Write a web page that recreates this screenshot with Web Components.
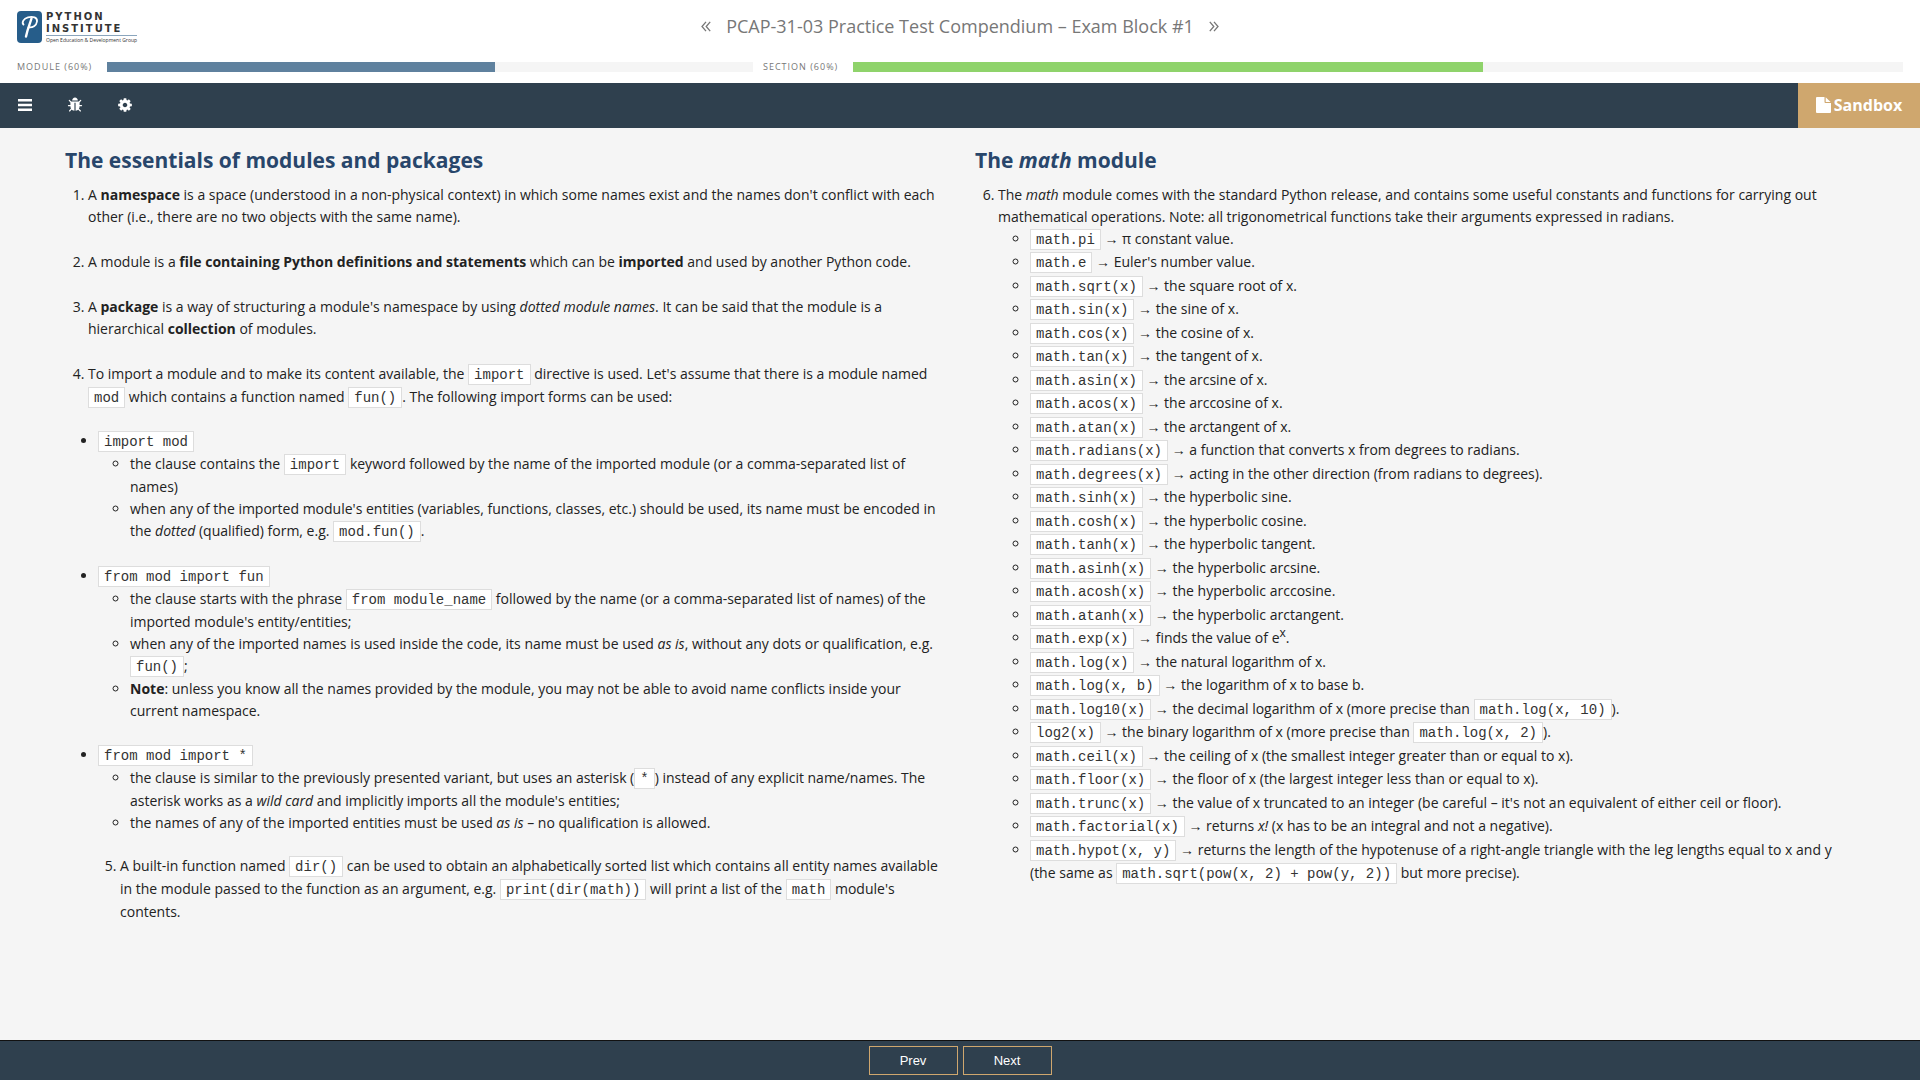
<!DOCTYPE html>
<html lang="en">
<head>
<meta charset="utf-8">
<title>PCAP-31-03 Practice Test Compendium</title>
<style>
  body {
    margin: 0;
    background: #f5f5f5;
    color: #222;
    font: 14px/22px "Open Sans", "Liberation Sans", sans-serif;
  }
</style>
</head>
<body>
<course-page>
  <course-header slot="top"></course-header>
  <tool-bar slot="top"></tool-bar>
  <modules-lesson></modules-lesson>
  <math-lesson></math-lesson>
  <page-nav slot="bottom"></page-nav>
</course-page>

<script>
const lessonStyle = `
  <style>
    :host { display: block; }
    h2 {
      margin: 0 0 12px;
      color: #28466b;
      font-size: 21px;
      font-weight: 700;
      line-height: 24px;
    }
    ol, ul { margin: 0; padding: 0; }
    ol { padding-left: 23px; }
    ul ul, ol ul { padding-left: 32px; list-style: circle; }
    b { font-weight: 700; }
    code {
      padding: 2px 5px 1px;
      border: 1px solid #ddd;
      background: #fff;
      color: #333;
      font: 14px/22px "Liberation Mono", monospace;
    }
    sup { font-size: 12px; line-height: 0; }
  </style>
`;

class CoursePage extends HTMLElement {
  constructor() {
    super();
    this.attachShadow({ mode: 'open' });
    this.shadowRoot.innerHTML = `
      <style>
        :host {
          display: flex;
          flex-direction: column;
          min-height: 100vh;
        }
        main {
          flex: 1;
          display: grid;
          grid-template-columns: 1fr 1fr;
          gap: 30px;
          padding: 20px 65px;
        }
      </style>
      <slot name="top"></slot>
      <main><slot></slot></main>
      <slot name="bottom"></slot>
    `;
  }
}

class BrandLogo extends HTMLElement {
  constructor() {
    super();
    this.attachShadow({ mode: 'open' });
    this.shadowRoot.innerHTML = `
      <style>
        :host { display: block; }
        a {
          display: flex;
          gap: 4px;
          color: #333;
          text-decoration: none;
        }
        .name {
          font: bold 10px/12px "DejaVu Sans", sans-serif;
          letter-spacing: 2px;
        }
        .name span { display: block; }
        small {
          display: block;
          border-top: 1px solid #8aa5bd;
          font: 5px/9px "Open Sans", sans-serif;
        }
      </style>
      <a href="#">
        <svg width="25" height="32" viewBox="0 0 25 32" aria-hidden="true">
          <rect width="25" height="32" rx="4" fill="#265d8a"/>
          <path d="M6.500 13.500C4.500 11.500 6.500 7.500 11 6.300C16 5 20.500 6.500 20 10.500C19.500 14.500 15.500 17 11.500 16.300" fill="none" stroke="#fff" stroke-width="1.800" stroke-linecap="round"/>
          <path d="M14.500 7.500C13 12.500 10.500 18 9 25.500" fill="none" stroke="#fff" stroke-width="2.400" stroke-linecap="round"/>
        </svg>
        <div>
          <div class="name"><span>PYTHON</span><span>INSTITUTE</span></div>
          <small>Open Education &amp; Development Group</small>
        </div>
      </a>
    `;
  }
}

class ProgressMeter extends HTMLElement {
  constructor() {
    super();
    this.attachShadow({ mode: 'open' });
  }

  connectedCallback() {
    const value = this.getAttribute('value');
    this.shadowRoot.innerHTML = `
      <style>
        :host { display: flex; align-items: center; }
        span {
          width: 90px;
          color: #777;
          font-size: 9px;
          line-height: 14px;
          letter-spacing: 1px;
          text-transform: uppercase;
        }
        .track { flex: 1; height: 10px; background: #f5f5f5; }
        .fill { width: ${value}%; height: 10px; background: var(--fill); }
      </style>
      <span id="label">${this.getAttribute('label')} (${value}%)</span>
      <div class="track" role="progressbar" aria-labelledby="label" aria-valuenow="${value}">
        <div class="fill"></div>
      </div>
    `;
  }
}

class CourseHeader extends HTMLElement {
  constructor() {
    super();
    this.attachShadow({ mode: 'open' });
    this.shadowRoot.innerHTML = `
      <style>
        :host {
          display: block;
          background: #fff;
          color: #777;
        }
        .title {
          display: grid;
          grid-template-columns: 1fr auto 1fr;
          height: 60px;
          padding: 0 17px;
        }
        brand-logo { margin-top: 11px; }
        nav {
          display: flex;
          align-items: center;
          gap: 15px;
          height: 52px;
        }
        h1 {
          margin: 0;
          font-size: 18px;
          font-weight: 400;
          line-height: 24px;
        }
        nav a { display: flex; color: inherit; }
        .meters {
          display: grid;
          grid-template-columns: 736fr 1140fr;
          gap: 10px;
          padding: 0 17px;
          height: 23px;
          align-items: start;
        }
      </style>
      <div class="title">
        <brand-logo></brand-logo>
        <nav>
          <a href="#" aria-label="Previous module">
            <svg width="10" height="11" viewBox="0 0 10 11" fill="none" stroke="currentColor" stroke-width="1.300"><path d="M5 .8L1 5.500L5 10.200M9.200 .8L5.200 5.500L9.200 10.200"/></svg>
          </a>
          <h1>PCAP-31-03 Practice Test Compendium – Exam Block #1</h1>
          <a href="#" aria-label="Next module">
            <svg width="10" height="11" viewBox="0 0 10 11" fill="none" stroke="currentColor" stroke-width="1.300"><path d="M.8 .8L4.800 5.500L.8 10.200M5 .8L9 5.500L5 10.200"/></svg>
          </a>
        </nav>
      </div>
      <div class="meters">
        <progress-meter label="Module" value="60" style="--fill: #5f819e"></progress-meter>
        <progress-meter label="Section" value="60" style="--fill: #8fd36b"></progress-meter>
      </div>
    `;
  }
}

class ToolBar extends HTMLElement {
  constructor() {
    super();
    this.attachShadow({ mode: 'open' });
    this.shadowRoot.innerHTML = `
      <style>
        :host {
          display: flex;
          justify-content: space-between;
          height: 45px;
          background: #2f404e;
        }
        .tools { display: flex; }
        button {
          display: flex;
          align-items: center;
          justify-content: center;
          gap: 3px;
          padding: 0 0 1px;
          border: 0;
          background: none;
          color: #fff;
          font: 700 16px/24px "Open Sans", sans-serif;
        }
        .tools button { width: 50px; }
        .sandbox { width: 122px; background: #cfa76e; }
        svg { fill: currentColor; }
      </style>
      <div class="tools">
        <button aria-label="Menu">
          <svg width="14" height="12" viewBox="0 0 14 12"><path d="M0 0h14v2.500H0zM0 4.700h14v2.500H0zM0 9.500h14v2.500H0z"/></svg>
        </button>
        <button aria-label="Report a bug">
          <svg width="16" height="16" viewBox="0 0 1792 1792"><path d="M1696 960q0 26-19 45t-45 19h-224q0 171-67 290l208 209q19 19 19 45t-19 45q-18 19-45 19t-45-19l-198-197q-5 5-15 13t-42 28.500-65 36.500-82 29-97 13v-896h-128v896q-51 0-101.500-13.500t-87-33-66-39-43.500-32.500l-15-14-183 207q-20 21-48 21-24 0-43-16-19-18-20.500-44.500t15.500-46.500l202-227q-58-114-58-274h-224q-26 0-45-19t-19-45 19-45 45-19h224v-294l-173-173q-19-19-19-45t19-45 45-19 45 19l173 173h844l173-173q19-19 45-19t45 19 19 45-19 45l-173 173v294h224q26 0 45 19t19 45zm-480-576h-640q0-133 93.500-226.500t226.500-93.500 226.500 93.500 93.500 226.500z"/></svg>
        </button>
        <button aria-label="Settings">
          <svg width="16" height="16" viewBox="0 0 1792 1792"><path d="M1152 896q0-106-75-181t-181-75-181 75-75 181 75 181 181 75 181-75 75-181zm512-109v222q0 12-8 23t-20 13l-185 28q-19 54-39 91 35 50 107 138 10 12 10 25t-9 23q-27 37-99 108t-94 71q-12 0-26-9l-138-108q-44 23-91 38-16 136-29 186-7 28-36 28h-222q-14 0-24.500-8.500t-11.500-21.500l-28-184q-49-16-90-37l-141 107q-10 9-25 9-14 0-25-11-126-114-165-168-7-10-7-23 0-12 8-23 15-21 51-66.500t54-70.500q-27-50-41-99l-183-27q-13-2-21-12.500t-8-23.500v-222q0-12 8-23t19-13l186-28q14-46 39-92-40-57-107-138-10-12-10-24 0-10 9-23 26-36 98.500-107.500t94.500-71.500q13 0 26 10l138 107q44-23 91-38 16-136 29-186 7-28 36-28h222q14 0 24.500 8.500t11.500 21.500l28 184q49 16 90 37l142-107q9-9 24-9 13 0 25 10 129 119 165 170 7 8 7 22 0 12-8 23-15 21-51 66.500t-54 70.500q26 50 41 98l183 28q13 2 21 12.500t8 23.500z"/></svg>
        </button>
      </div>
      <button class="sandbox">
        <svg width="15" height="16" viewBox="0 0 15 16"><path d="M0 1q0-1 1-1h7.500v5q0 1 1 1H15v9q0 1-1 1H1q-1 0-1-1zM9.700 0.200L14.600 4.900H9.700z"/></svg>
        <span>Sandbox</span>
      </button>
    `;
  }
}

class ModulesLesson extends HTMLElement {
  constructor() {
    super();
    this.attachShadow({ mode: 'open' });
    this.shadowRoot.innerHTML = lessonStyle + `
      <style>
        .points, .forms { display: grid; }
        .points { gap: 23px; }
        .forms {
          gap: 22px;
          margin: 21px 0;
          padding-left: 33px;
        }
        .next { padding-left: 55px; }
      </style>
      <h2>The essentials of modules and packages</h2>
      <ol class="points">
        <li>A <b>namespace</b> is a space (understood in a non-physical context) in which some names exist and the names don't conflict with each other (i.e., there are no two objects with the same name).</li>
        <li>A module is a <b>file containing Python definitions and statements</b> which can be <b>imported</b> and used by another Python code.</li>
        <li>A <b>package</b> is a way of structuring a module's namespace by using <i>dotted module names</i>. It can be said that the module is a hierarchical <b>collection</b> of modules.</li>
        <li>To import a module and to make its content available, the <code>import</code> directive is used. Let's assume that there is a module named <code>mod</code> which contains a function named <code>fun()</code>. The following import forms can be used:</li>
      </ol>
      <ul class="forms">
        <li><code>import mod</code>
          <ul>
            <li>the clause contains the <code>import</code> keyword followed by the name of the imported module (or a comma-separated list of names)</li>
            <li>when any of the imported module's entities (variables, functions, classes, etc.) should be used, its name must be encoded in the <i>dotted</i> (qualified) form, e.g. <code>mod.fun()</code>.</li>
          </ul>
        </li>
        <li><code>from mod import fun</code>
          <ul>
            <li>the clause starts with the phrase <code>from module_name</code> followed by the name (or a comma-separated list of names) of the imported module's entity/entities;</li>
            <li>when any of the imported names is used inside the code, its name must be used <i>as is</i>, without any dots or qualification, e.g. <code>fun()</code>;</li>
            <li><b>Note</b>: unless you know all the names provided by the module, you may not be able to avoid name conflicts inside your current namespace.</li>
          </ul>
        </li>
        <li><code>from mod import *</code>
          <ul>
            <li>the clause is similar to the previously presented variant, but uses an asterisk (<code>*</code>) instead of any explicit name/names. The asterisk works as a <i>wild card</i> and implicitly imports all the module's entities;</li>
            <li>the names of any of the imported entities must be used <i>as is</i> – no qualification is allowed.</li>
          </ul>
        </li>
      </ul>
      <ol class="next" start="5">
        <li>A built-in function named <code>dir()</code> can be used to obtain an alphabetically sorted list which contains all entity names available in the module passed to the function as an argument, e.g. <code>print(dir(math))</code> will print a list of the <code>math</code> module's contents.</li>
      </ol>
    `;
  }
}

class MathLesson extends HTMLElement {
  constructor() {
    super();
    this.attachShadow({ mode: 'open' });
    this.entries = [
      ['math.pi', 'π constant value.'],
      ['math.e', "Euler's number value."],
      ['math.sqrt(x)', 'the square root of x.'],
      ['math.sin(x)', 'the sine of x.'],
      ['math.cos(x)', 'the cosine of x.'],
      ['math.tan(x)', 'the tangent of x.'],
      ['math.asin(x)', 'the arcsine of x.'],
      ['math.acos(x)', 'the arccosine of x.'],
      ['math.atan(x)', 'the arctangent of x.'],
      ['math.radians(x)', 'a function that converts x from degrees to radians.'],
      ['math.degrees(x)', 'acting in the other direction (from radians to degrees).'],
      ['math.sinh(x)', 'the hyperbolic sine.'],
      ['math.cosh(x)', 'the hyperbolic cosine.'],
      ['math.tanh(x)', 'the hyperbolic tangent.'],
      ['math.asinh(x)', 'the hyperbolic arcsine.'],
      ['math.acosh(x)', 'the hyperbolic arccosine.'],
      ['math.atanh(x)', 'the hyperbolic arctangent.'],
      ['math.exp(x)', 'finds the value of e<sup>x</sup>.'],
      ['math.log(x)', 'the natural logarithm of x.'],
      ['math.log(x, b)', 'the logarithm of x to base b.'],
      ['math.log10(x)', 'the decimal logarithm of x (more precise than <code>math.log(x, 10)</code>).'],
      ['log2(x)', 'the binary logarithm of x (more precise than <code>math.log(x, 2)</code>).'],
      ['math.ceil(x)', 'the ceiling of x (the smallest integer greater than or equal to x).'],
      ['math.floor(x)', 'the floor of x (the largest integer less than or equal to x).'],
      ['math.trunc(x)', "the value of x truncated to an integer (be careful – it's not an equivalent of either ceil or floor)."],
      ['math.factorial(x)', 'returns <i>x!</i> (x has to be an integral and not a negative).'],
      ['math.hypot(x, y)', 'returns the length of the hypotenuse of a right-angle triangle with the leg lengths equal to x and y (the same as <code>math.sqrt(pow(x, 2) + pow(y, 2))</code> but more precise).']
    ];
  }

  connectedCallback() {
    this.shadowRoot.innerHTML = lessonStyle + `
      <style>
        ul li:nth-child(even) { margin-bottom: 1px; }
      </style>
      <h2>The <i>math</i> module</h2>
      <ol start="6">
        <li>The <i>math</i> module comes with the standard Python release, and contains some useful constants and functions for carrying out mathematical operations. Note: all trigonometrical functions take their arguments expressed in radians.
          <ul>
            ${this.entries.map(([name, text]) => `<li><code>${name}</code> → ${text}</li>`).join('')}
          </ul>
        </li>
      </ol>
    `;
  }
}

class PageNav extends HTMLElement {
  constructor() {
    super();
    this.attachShadow({ mode: 'open' });
    this.shadowRoot.innerHTML = `
      <style>
        :host {
          display: flex;
          justify-content: center;
          align-items: center;
          gap: 5px;
          height: 39px;
          border-top: 1px solid #111;
          background: #2f404e;
        }
        button {
          width: 89px;
          height: 29px;
          padding: 0;
          border: 1px solid #cfa76e;
          background: none;
          color: #fff;
          font: 13px/16px "Liberation Sans", sans-serif;
        }
      </style>
      <button>Prev</button>
      <button>Next</button>
    `;
  }
}

customElements.define('brand-logo', BrandLogo);
customElements.define('progress-meter', ProgressMeter);
customElements.define('course-header', CourseHeader);
customElements.define('tool-bar', ToolBar);
customElements.define('modules-lesson', ModulesLesson);
customElements.define('math-lesson', MathLesson);
customElements.define('page-nav', PageNav);
customElements.define('course-page', CoursePage);
</script>
</body>
</html>
